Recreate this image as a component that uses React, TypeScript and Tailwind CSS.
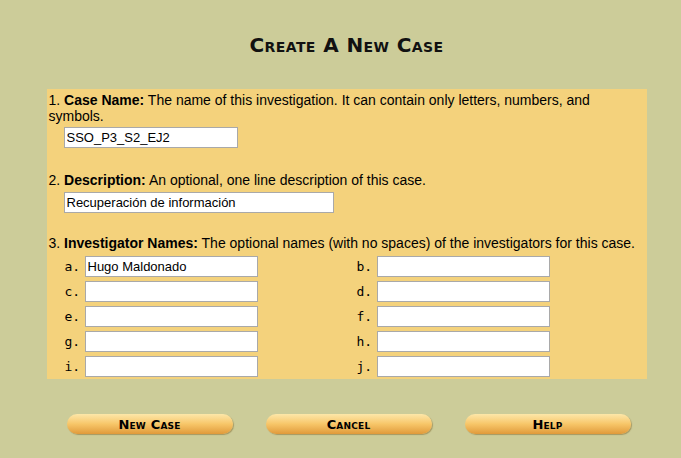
const sans = { fontFamily: '"Liberation Sans", Arial, sans-serif' };

function Field({ value, width }: { value?: string; width: string }) {
  return (
    <input
      readOnly
      defaultValue={value ?? ''}
      className={`${width} h-[21px] bg-white border border-[#a9a9a9] px-[2px] text-[13px] text-black outline-none`}
      style={sans}
    />
  );
}

function Investigator({ label, value }: { label: string; value?: string }) {
  return (
    <div className="flex items-center">
      <span className="w-[20px] text-[13px] font-['DejaVu_Sans_Mono',monospace] text-black">{label}.</span>
      <Field value={value} width="w-[173px]" />
    </div>
  );
}

function OrangeButton({ label }: { label: string }) {
  return (
    <button className="w-[166px] h-[20px] rounded-full bg-gradient-to-b from-[#fde7a8] via-[#f7c668] to-[#e09a3a] shadow-[1px_1px_1px_rgba(120,90,30,0.45)] flex items-center justify-center">
      <span className="text-[13px] font-bold text-black [font-variant:small-caps] font-['DejaVu_Sans',sans-serif] tracking-[0.2px] leading-none">
        {label}
      </span>
    </button>
  );
}

export default function App() {
  const names = ['a', 'b', 'c', 'd', 'e', 'f', 'g', 'h', 'i', 'j'];
  return (
    <div className="w-[681px] h-[458px] bg-[#cccc99] pl-[12px] flex flex-col items-center" style={sans}>
      <h1 className="mt-[33px] h-[24px] text-[20px] font-bold text-[#111] [font-variant:small-caps] font-['DejaVu_Sans',sans-serif] tracking-[0.4px] leading-[24px]">
        Create A New Case
      </h1>

      <div className="mt-[32px] w-[600px] bg-[#f4d27c] pl-[2px] pb-[2px] text-[14px] leading-[16px] text-black">
        <p className="mt-[3px]">
          1. <b>Case Name:</b> The name of this investigation. It can contain only letters, numbers, and symbols.
        </p>
        <div className="pl-[15px] mt-[3px]">
          <Field value="SSO_P3_S2_EJ2" width="w-[174px]" />
        </div>

        <p className="mt-[24px]">
          2. <b>Description:</b> An optional, one line description of this case.
        </p>
        <div className="pl-[15px] mt-[4px]">
          <Field value="Recuperación de información" width="w-[270px]" />
        </div>

        <p className="mt-[22px]">
          3. <b>Investigator Names:</b> The optional names (with no spaces) of the investigators for this case.
        </p>
        <div className="mt-[5px] grid grid-cols-[292px_200px] gap-y-[4px] pl-[16px]">
          {names.map((n, i) => (
            <Investigator key={n} label={n} value={i === 0 ? 'Hugo Maldonado' : undefined} />
          ))}
        </div>
      </div>

      <div className="mt-[35px] ml-[4px] w-[564px] flex justify-between">
        <OrangeButton label="New Case" />
        <OrangeButton label="Cancel" />
        <OrangeButton label="Help" />
      </div>
    </div>
  );
}
